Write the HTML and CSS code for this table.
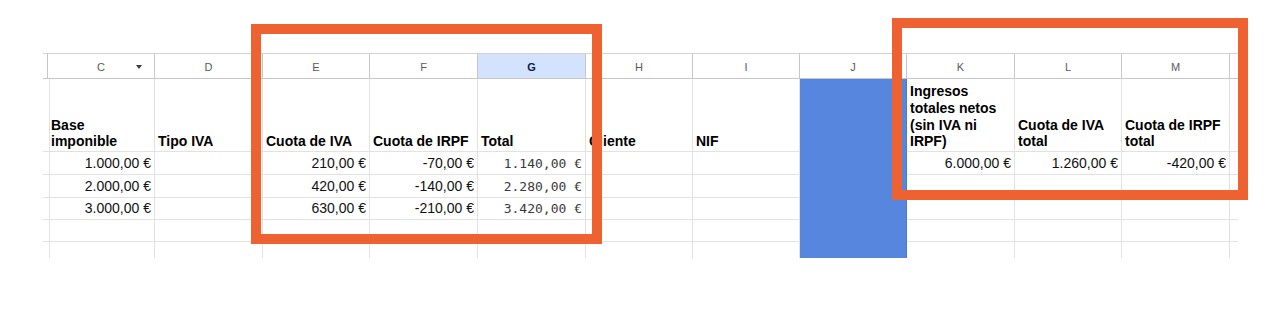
FILE: index.html
```html
<!DOCTYPE html>
<html lang="es">
<head>
<meta charset="utf-8">
<title>Hoja de cálculo</title>
<link rel="stylesheet" href="styles.css">
</head>
<body>
<div class="page">
  <div class="sheet">
    <!-- column header row -->
    <div class="hd"></div>
    <div class="hd hd-c"><span></span><span class="letter">C</span><span class="caret"></span></div>
    <div class="hd">D</div>
    <div class="hd">E</div>
    <div class="hd">F</div>
    <div class="hd sel">G</div>
    <div class="hd">H</div>
    <div class="hd">I</div>
    <div class="hd">J</div>
    <div class="hd">K</div>
    <div class="hd">L</div>
    <div class="hd">M</div>
    <div class="hd tail"></div>

    <!-- titles row -->
    <div class="c"></div>
    <div class="c b">Base imponible</div>
    <div class="c b">Tipo IVA</div>
    <div class="c b">Cuota de IVA</div>
    <div class="c b">Cuota de IRPF</div>
    <div class="c b">Total</div>
    <div class="c b">Cliente</div>
    <div class="c b">NIF</div>
    <div class="c blue"></div>
    <div class="c b">Ingresos totales netos (sin IVA ni IRPF)</div>
    <div class="c b">Cuota de IVA total</div>
    <div class="c b">Cuota de IRPF total</div>
    <div class="c tail"></div>

    <!-- row 1 -->
    <div class="c"></div>
    <div class="c n">1.000,00 €</div>
    <div class="c"></div>
    <div class="c n">210,00 €</div>
    <div class="c n">-70,00 €</div>
    <div class="c n mono">1.140,00 €</div>
    <div class="c"></div>
    <div class="c"></div>
    <div class="c blue"></div>
    <div class="c n">6.000,00 €</div>
    <div class="c n">1.260,00 €</div>
    <div class="c n">-420,00 €</div>
    <div class="c tail"></div>

    <!-- row 2 -->
    <div class="c"></div>
    <div class="c n">2.000,00 €</div>
    <div class="c"></div>
    <div class="c n">420,00 €</div>
    <div class="c n">-140,00 €</div>
    <div class="c n mono">2.280,00 €</div>
    <div class="c"></div>
    <div class="c"></div>
    <div class="c blue"></div>
    <div class="c"></div>
    <div class="c"></div>
    <div class="c"></div>
    <div class="c tail"></div>

    <!-- row 3 -->
    <div class="c"></div>
    <div class="c n">3.000,00 €</div>
    <div class="c"></div>
    <div class="c n">630,00 €</div>
    <div class="c n">-210,00 €</div>
    <div class="c n mono">3.420,00 €</div>
    <div class="c"></div>
    <div class="c"></div>
    <div class="c blue"></div>
    <div class="c"></div>
    <div class="c"></div>
    <div class="c"></div>
    <div class="c tail"></div>

    <!-- row 4 -->
    <div class="c"></div>
    <div class="c"></div>
    <div class="c"></div>
    <div class="c"></div>
    <div class="c"></div>
    <div class="c"></div>
    <div class="c"></div>
    <div class="c"></div>
    <div class="c blue"></div>
    <div class="c"></div>
    <div class="c"></div>
    <div class="c"></div>
    <div class="c tail"></div>

    <!-- row 5 (cut) -->
    <div class="c last"></div>
    <div class="c last"></div>
    <div class="c last"></div>
    <div class="c last"></div>
    <div class="c last"></div>
    <div class="c last"></div>
    <div class="c last"></div>
    <div class="c last"></div>
    <div class="c last blue"></div>
    <div class="c last"></div>
    <div class="c last"></div>
    <div class="c last"></div>
    <div class="c last tail"></div>
  </div>

  <div class="mark mark-left"></div>
  <div class="mark mark-right"></div>
</div>
</body>
</html>
```

FILE: styles.css
```css
html, body {
  margin: 0;
  padding: 0;
  background: #ffffff;
}

body {
  font-family: "Liberation Sans", Arial, sans-serif;
  color: #000000;
}

.page {
  position: relative;
  width: 1286px;
  height: 310px;
  padding: 53px 0 0 43px;
  box-sizing: border-box;
  overflow: hidden;
}

.sheet {
  display: grid;
  grid-template-columns: 5px 107px 108px 107px 108px 108px 107px 107px 107px 108px 107px 108px 8px;
  grid-template-rows: 26px 73px 23px 23px 22px 22px 16px;
  width: 1195px;
}

/* column header cells */
.hd {
  box-sizing: border-box;
  border-top: 1px solid #d4d4d4;
  border-bottom: 1px solid #c7c7c7;
  border-right: 1px solid #c7c7c7;
  font-size: 11px;
  color: #575a5e;
  display: flex;
  align-items: center;
  justify-content: center;
  padding-top: 1px;
}

.hd.tail {
  border-right: 0;
}

.hd.sel {
  background: #d3e3fd;
  color: #0b1f45;
  font-weight: bold;
}

.hd-c {
  display: grid;
  grid-template-columns: 1fr auto 1fr;
  align-items: center;
}

.hd-c .caret {
  justify-self: end;
  margin-right: 12px;
  width: 0;
  height: 0;
  border-left: 3.5px solid transparent;
  border-right: 3.5px solid transparent;
  border-top: 4px solid #3c3c3c;
}

/* body cells */
.c {
  box-sizing: border-box;
  border-right: 1px solid #e2e2e2;
  border-bottom: 1px solid #e2e2e2;
  display: flex;
  flex-direction: column;
  justify-content: flex-end;
  padding: 0 3px 2px 3px;
  font-size: 14px;
  line-height: 17px;
  overflow: hidden;
}

.c.tail {
  border-right: 0;
}

.c.last {
  border-bottom: 0;
}

.c.b {
  font-weight: bold;
  padding-bottom: 1px;
  line-height: 16.7px;
}

.c.n {
  text-align: right;
  white-space: nowrap;
  color: #111111;
}

.c.mono {
  font-family: "DejaVu Sans Mono", "Liberation Mono", monospace;
  font-size: 13px;
  color: #3a3a3a;
}

.c.blue {
  background: #5686de;
  border-bottom-color: transparent;
  border-right-color: #4d7ad0;
}

/* orange highlight frames drawn over the sheet */
.mark {
  position: absolute;
  box-sizing: border-box;
  border: 10px solid #ed6230;
}

.mark-left {
  left: 251px;
  top: 24px;
  width: 351px;
  height: 220px;
}

.mark-right {
  left: 892px;
  top: 18px;
  width: 356px;
  height: 182px;
}
```
